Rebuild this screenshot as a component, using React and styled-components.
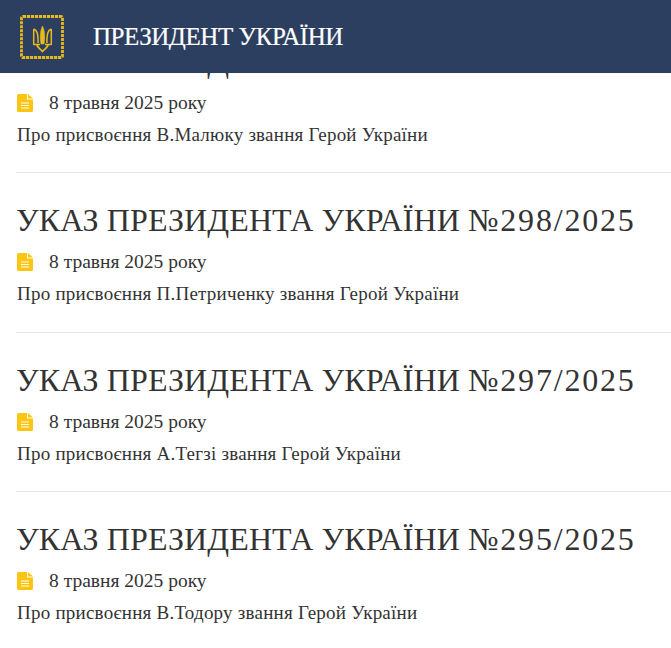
import React from 'react';
import styled, { createGlobalStyle } from 'styled-components';

const decrees = [
  { number: '299', text: 'Про присвоєння В.Малюку звання Герой України' },
  { number: '298', text: 'Про присвоєння П.Петриченку звання Герой України' },
  { number: '297', text: 'Про присвоєння А.Тегзі звання Герой України' },
  { number: '295', text: 'Про присвоєння В.Тодору звання Герой України' },
];

const Emblem = () => (
  <svg width="46" height="46" viewBox="0 0 46 46" fill="none">
    <rect x="2.500" y="2.500" width="41" height="41" rx="1.500" stroke="#e6b91e" strokeWidth="2.800" strokeDasharray="3.200 .8" />
    <g stroke="#e6b91e" strokeLinejoin="round">
      <path d="M23.500 12C21 17 21 24 22 30h3c1-6 1-13-1.500-18z" fill="#e6b91e" strokeWidth=".6" />
      <path d="M14.700 15v15.500h6.300M14.700 15c3.300 1.200 4.400 4 4.400 14" strokeWidth="1.500" />
      <path d="M32.300 15v15.500H26M32.300 15c-3.300 1.200-4.400 4-4.400 14" strokeWidth="1.500" />
      <path d="M18 31c.5 3 3 3.500 5.500 6.500C26 34.500 28.500 34 29 31" strokeWidth="1.800" />
    </g>
  </svg>
);

const DocIcon = () => (
  <svg width="16" height="18" viewBox="0 0 16 18">
    <path d="M1.500 0H10v5.500h6V16.500a1.500 1.500 0 0 1-1.500 1.500h-13A1.500 1.500 0 0 1 0 16.500v-15A1.500 1.500 0 0 1 1.500 0z" fill="#fdc50f" />
    <path d="M11 0l5 4.500h-5z" fill="#fdc50f" />
    <path d="M4 9h8M4 11.500h8M4 14h8" stroke="#fff" strokeWidth="1.100" />
  </svg>
);

const App = () => (
  <Page>
    <GlobalStyle />
    <Header>
      <Emblem />
      <Brand>ПРЕЗИДЕНТ УКРАЇНИ</Brand>
    </Header>
    <List>
      {decrees.map(({ number, text }) => (
        <Item key={number}>
          <Title>
            УКАЗ ПРЕЗИДЕНТА УКРАЇНИ <DecreeNumber>№{number}/2025</DecreeNumber>
          </Title>
          <DateRow>
            <DocIcon />
            <DateText>8 травня 2025 року</DateText>
          </DateRow>
          <Description>{text}</Description>
        </Item>
      ))}
    </List>
  </Page>
);

export default App;

const GlobalStyle = createGlobalStyle`
  html, body {
    margin: 0;
    padding: 0;
    background: #fff;
  }
  body {
    font-family: "Liberation Serif", "Times New Roman", serif;
  }
`;

const Page = styled.div`
  position: relative;
  width: 671px;
  height: 648px;
  overflow: hidden;
`;

const Header = styled.header`
  position: absolute;
  top: 0;
  left: 0;
  right: 0;
  z-index: 2;
  height: 73px;
  display: flex;
  align-items: center;
  gap: 28px;
  padding-left: 19px;
  background: #2d3f60;
`;

const Brand = styled.div`
  color: #fff;
  font-size: 25px;
  letter-spacing: -0.45px;
  -webkit-text-stroke: 0.2px #fff;
  white-space: nowrap;
`;

const List = styled.main`
  margin-top: 13.600px;
  padding: 0 0 0 16px;
`;

const Item = styled.article`
  height: 159.500px;
  box-sizing: border-box;
  padding-top: 27px;
  border-bottom: 1px solid #e6e6e6;
  &:last-child {
    border-bottom: none;
  }
`;

const Title = styled.h2`
  margin: 0;
  color: #333;
  font-size: 32px;
  font-weight: 400;
  line-height: 40px;
  letter-spacing: 0.1px;
  white-space: nowrap;
`;

const DecreeNumber = styled.span`
  letter-spacing: 1.800px;
`;

const DateRow = styled.div`
  display: flex;
  align-items: center;
  gap: 16px;
  margin: 10px 0 0 1px;
  height: 24px;
`;

const DateText = styled.span`
  color: #333;
  font-size: 19.500px;
`;

const Description = styled.p`
  margin: 8px 0 0 1px;
  color: #333;
  font-size: 19px;
  line-height: 24px;
  letter-spacing: 0.23px;
  white-space: nowrap;
`;
